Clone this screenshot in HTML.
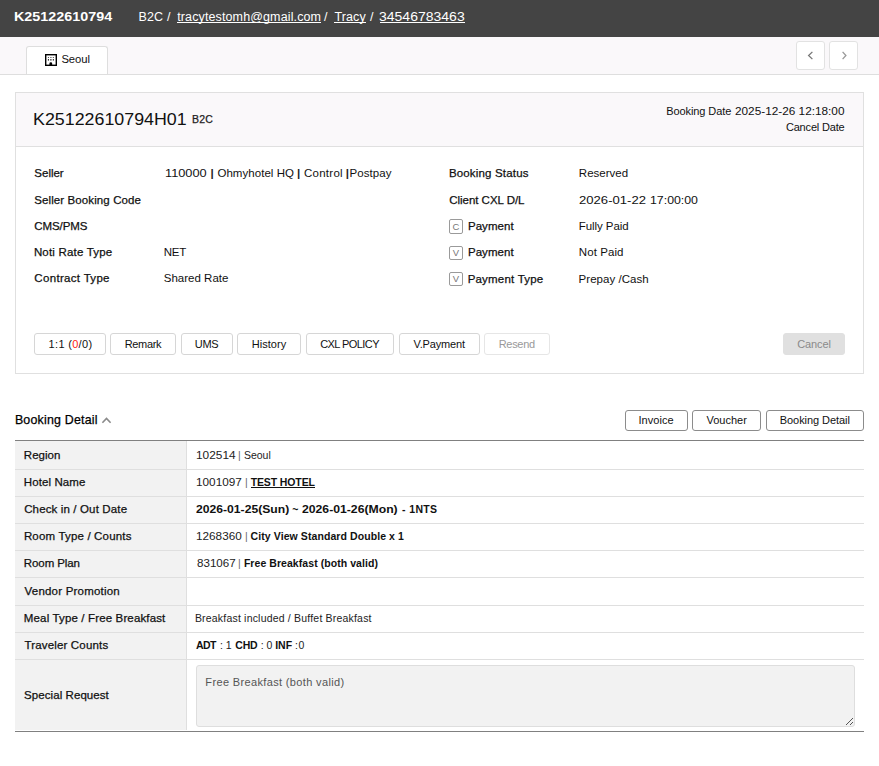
<!DOCTYPE html>
<html lang="en">
<head>
<meta charset="utf-8">
<title>Booking K25122610794</title>
<style>
*{box-sizing:border-box;margin:0;padding:0}
html,body{width:879px;height:766px;overflow:hidden;background:#fff}
body{font-family:"Liberation Sans","NanumGothic",sans-serif;font-size:12px;color:#222;position:relative}
.a{position:absolute}
.t{transform-origin:0 100%;position:absolute;white-space:nowrap;line-height:16px;height:16px}
.m{-webkit-text-stroke:0.25px currentColor}
.b{font-weight:700}
.ul{position:absolute;height:1px}
#topbar{left:0;top:0;width:879px;height:37px;background:#444}
#tabs{left:0;top:37px;width:879px;height:38px;background:#faf8fa;border-bottom:1px solid #dedede}
#tab1{left:26px;top:46px;width:82px;height:28px;background:#fff;border:1px solid #dedede;border-bottom:none;border-radius:3px 3px 0 0}
.navb{top:41px;width:29px;height:29px;background:#fff;border:1px solid #e2e2e2;border-radius:3px}
#card{left:15px;top:92px;width:849px;height:282px;border:1px solid #e0e0e0;background:#fff}
#cardhead{left:16px;top:93px;width:847px;height:54px;background:#faf8fa;border-bottom:1px solid #e0e0e0}
.btn{position:absolute;height:22px;border:1px solid #d6d6d6;border-radius:3px;background:#fff}
.btn.dis{border-color:#e6e6e6}
.btn.gray{background:#e0e0e0;border-color:#e0e0e0}
.btn.dk{border-color:#8c8c8c;height:21px}
.ic{position:absolute;width:14px;height:14px;border:1px solid #9a9a9a;border-radius:2px;background:#fff}
.ic span{position:absolute;left:0;width:12px;top:0;height:12px;line-height:12px;font-size:9.5px;text-align:center;color:#777}
.pipe{position:absolute;width:1.5px;background:#222}
.tp{position:absolute;width:1px;background:#777}
.lab{position:absolute;left:15px;width:172px;background:#f2f2f2;border-right:1px solid #dfdfdf}
.hl{position:absolute;left:15px;width:849px;height:1px;background:#dfdfdf}
</style>
</head>
<body>
<div id="topbar" class="a"></div>
<div id="tabs" class="a"></div>
<div id="tab1" class="a"></div>
<svg class="a" style="left:45px;top:54px" width="12" height="12" viewBox="0 0 12 12"><rect x="0.7" y="0.7" width="10.6" height="10.6" fill="#fff" stroke="#000" stroke-width="1.4"/><path d="M4.4 11V9.7a1.4 1.4 0 0 1 2.8 0V11z" fill="#000"/><g fill="#555"><rect x="2.9" y="3" width="1.1" height="1"/><rect x="5.3" y="3" width="1.2" height="1"/><rect x="7.8" y="3" width="1.1" height="1"/></g><g fill="#333"><rect x="2.9" y="5" width="1.1" height="1.6"/><rect x="5.3" y="5" width="1.2" height="1.6"/><rect x="7.8" y="5" width="1.1" height="1.6"/></g></svg>
<div class="navb a" style="left:796px"></div>
<div class="navb a" style="left:829px"></div>
<svg class="a" style="left:805px;top:50px" width="10" height="11" viewBox="0 0 10 11"><path d="M7.4 1.9L3.6 5.5l3.8 3.6" fill="none" stroke="#777" stroke-width="1.3"/></svg>
<svg class="a" style="left:839px;top:50px" width="10" height="11" viewBox="0 0 10 11"><path d="M3.6 1.9L6.9 5.5L3.6 9.1" fill="none" stroke="#999" stroke-width="1.3"/></svg>

<div id="card" class="a"></div>
<div id="cardhead" class="a"></div>


<div class="ic" style="left:449px;top:219px;height:15px"><span style="top:1px">C</span></div>
<div class="ic" style="left:449px;top:246px"><span>V</span></div>
<div class="ic" style="left:449px;top:272px"><span>V</span></div>

<div class="btn" style="left:34px;top:333px;width:72px"></div>
<div class="btn" style="left:110px;top:333px;width:66px"></div>
<div class="btn" style="left:181px;top:333px;width:52px"></div>
<div class="btn" style="left:237px;top:333px;width:64px"></div>
<div class="btn" style="left:306px;top:333px;width:88px"></div>
<div class="btn" style="left:399px;top:333px;width:81px"></div>
<div class="btn dis" style="left:484px;top:333px;width:66px"></div>
<div class="btn gray" style="left:783px;top:333px;width:62px"></div>

<svg class="a" style="left:101px;top:415px" width="11" height="10" viewBox="0 0 11 10"><path d="M1.4 7.8L5.5 3.4l4.1 4.4" fill="none" stroke="#8a8a8a" stroke-width="1.6"/></svg>
<div class="btn dk" style="left:625px;top:410px;width:63px"></div>
<div class="btn dk" style="left:692px;top:410px;width:69px"></div>
<div class="btn dk" style="left:766px;top:410px;width:98px"></div>

<div class="a" style="left:15px;top:440px;width:849px;height:1px;background:#808080"></div>
<div class="lab" style="top:441px;height:289px"></div>
<div class="hl" style="top:469px"></div>
<div class="hl" style="top:496px"></div>
<div class="hl" style="top:523px"></div>
<div class="hl" style="top:550px"></div>
<div class="hl" style="top:577px"></div>
<div class="hl" style="top:605px"></div>
<div class="hl" style="top:632px"></div>
<div class="hl" style="top:659px"></div>
<div class="a" style="left:15px;top:731px;width:849px;height:1px;background:#808080"></div>
<div class="a" style="left:196px;top:665px;width:659px;height:62px;background:#f2f2f2;border:1px solid #dedede;border-radius:3px"></div>
<svg class="a" style="left:844px;top:716px" width="10" height="10" viewBox="0 0 10 10"><path d="M9 2L2 9M9 6L6 9" stroke="#555" stroke-width="1" fill="none"/></svg>


<div class="ul" style="left:177px;top:22px;width:144px;background:#fff"></div>
<div class="ul" style="left:334px;top:22px;width:32px;background:#fff"></div>
<div class="ul" style="left:380px;top:22px;width:85px;background:#fff"></div>
<div class="ul" style="left:250.5px;top:487px;width:64.5px;background:#111"></div>

<span class="t b" id="h1" style="left:13.54px;top:9.00px;font-size:12.5px;color:#fff;transform:scale(1.1481,1.0);">K25122610794</span>
<span class="t" id="h2" style="left:138.56px;top:9.00px;font-size:12.5px;color:#fff;letter-spacing:0.135px;">B2C /</span>
<span class="t" id="h3" style="left:177.19px;top:9.00px;font-size:12.5px;color:#fff;letter-spacing:0.124px;">tracytestomh@gmail.com</span>
<span class="t" id="h4" style="left:324.00px;top:9.00px;font-size:12.5px;color:#fff;">/</span>
<span class="t" id="h5" style="left:334.51px;top:9.00px;font-size:12.5px;color:#fff;letter-spacing:0.091px;">Tracy</span>
<span class="t" id="h6" style="left:370.00px;top:9.00px;font-size:12.5px;color:#fff;">/</span>
<span class="t" id="h7" style="left:379.16px;top:9.00px;font-size:12.5px;color:#fff;transform:scale(1.1206,1.0);">34546783463</span>
<span class="t" id="tabt" style="left:61.39px;top:51.00px;font-size:11.25px;color:#111;letter-spacing:-0.044px;">Seoul</span>
<span class="t" id="c1" style="left:32.58px;top:112.00px;font-size:16px;color:#111;transform:scale(1.1146,1.0);">K25122610794H01</span>
<span class="t m" id="c2" style="left:192.07px;top:111.00px;font-size:10.5px;color:#222;letter-spacing:0.218px;">B2C</span>
<span class="t" id="c3a" style="left:666.37px;top:103.00px;font-size:11px;color:#111;letter-spacing:-0.104px;">Booking Date</span>
<span class="t" id="c3b" style="left:735.23px;top:103.00px;font-size:11px;color:#111;transform:scale(1.0716,1.0);">2025-12-26 12:18:00</span>
<span class="t" id="c4" style="left:785.89px;top:119.00px;font-size:11px;color:#111;letter-spacing:-0.167px;">Cancel Date</span>
<span class="t m" id="l1" style="left:34.36px;top:165.00px;font-size:11.5px;color:#111;letter-spacing:-0.016px;">Seller</span>
<span class="t m" id="l2" style="left:34.19px;top:192.00px;font-size:11.5px;color:#111;letter-spacing:0.109px;">Seller Booking Code</span>
<span class="t m" id="l3" style="left:34.14px;top:218.00px;font-size:11.5px;color:#111;letter-spacing:-0.050px;">CMS/PMS</span>
<span class="t m" id="l4" style="left:33.89px;top:244.00px;font-size:11.5px;color:#111;letter-spacing:0.187px;">Noti Rate Type</span>
<span class="t m" id="l5" style="left:34.37px;top:270.00px;font-size:11.5px;color:#111;letter-spacing:0.314px;">Contract Type</span>
<span class="t" id="v1a" style="left:164.77px;top:165.00px;font-size:11.5px;color:#111;transform:scale(1.1104,1.0);">110000</span>
<span class="t" id="v1c" style="left:217.46px;top:165.00px;font-size:11.5px;color:#111;letter-spacing:0.040px;">Ohmyhotel HQ</span>
<span class="t" id="v1e" style="left:303.99px;top:165.00px;font-size:11.5px;color:#111;letter-spacing:0.264px;">Control</span>
<span class="t" id="v1g" style="left:349.51px;top:165.00px;font-size:11.5px;color:#111;letter-spacing:0.067px;">Postpay</span>
<span class="t" id="v4" style="left:163.79px;top:244.00px;font-size:11.5px;color:#111;letter-spacing:-0.280px;">NET</span>
<span class="t" id="v5" style="left:163.81px;top:270.00px;font-size:11.5px;color:#111;letter-spacing:-0.000px;">Shared Rate</span>
<span class="t m" id="r1" style="left:448.88px;top:165.00px;font-size:11.5px;color:#111;letter-spacing:0.175px;">Booking Status</span>
<span class="t m" id="r2" style="left:449.17px;top:192.00px;font-size:11.5px;color:#111;letter-spacing:-0.021px;">Client CXL D/L</span>
<span class="t m" id="r3" style="left:467.94px;top:218.00px;font-size:11.5px;color:#111;letter-spacing:0.057px;">Payment</span>
<span class="t m" id="r4" style="left:467.94px;top:244.00px;font-size:11.5px;color:#111;letter-spacing:0.057px;">Payment</span>
<span class="t m" id="r5" style="left:467.64px;top:271.00px;font-size:11.5px;color:#111;letter-spacing:0.208px;">Payment Type</span>
<span class="t" id="w1" style="left:578.82px;top:165.00px;font-size:11.5px;color:#111;letter-spacing:0.018px;">Reserved</span>
<span class="t" id="w2a" style="left:579.28px;top:192.00px;font-size:11.5px;color:#111;transform:scale(1.1389,1.0);">2026-01-22</span>
<span class="t" id="w2b" style="left:650.02px;top:192.00px;font-size:11.5px;color:#111;transform:scale(1.0717,1.0);">17:00:00</span>
<span class="t" id="w3" style="left:578.82px;top:218.00px;font-size:11.5px;color:#111;letter-spacing:-0.079px;">Fully Paid</span>
<span class="t" id="w4" style="left:578.82px;top:244.00px;font-size:11.5px;color:#111;letter-spacing:0.075px;">Not Paid</span>
<span class="t" id="w5" style="left:578.62px;top:271.00px;font-size:11.5px;color:#111;letter-spacing:0.036px;">Prepay /Cash</span>
<span class="t" id="b1" style="left:48.61px;top:336.00px;font-size:11px;color:#111;letter-spacing:0.307px;">1:1 (<span style="color:#f21">0</span>/0)</span>
<span class="t" id="b2" style="left:124.74px;top:336.00px;font-size:11px;color:#111;letter-spacing:-0.359px;">Remark</span>
<span class="t" id="b3" style="left:194.82px;top:336.00px;font-size:11px;color:#111;letter-spacing:-0.345px;">UMS</span>
<span class="t" id="b4" style="left:251.69px;top:336.00px;font-size:11px;color:#111;letter-spacing:0.055px;">History</span>
<span class="t" id="b5" style="left:320.23px;top:336.00px;font-size:11px;color:#111;letter-spacing:-0.566px;">CXL POLICY</span>
<span class="t" id="b6" style="left:413.55px;top:336.00px;font-size:11px;color:#111;letter-spacing:-0.165px;">V.Payment</span>
<span class="t" id="b7" style="left:498.74px;top:336.00px;font-size:11px;color:#999;letter-spacing:-0.322px;">Resend</span>
<span class="t" id="b8" style="left:797.17px;top:336.00px;font-size:11px;color:#8a8a8a;letter-spacing:-0.080px;">Cancel</span>
<span class="t m" id="bd" style="left:14.88px;top:412.00px;font-size:12.4px;color:#000;letter-spacing:0.212px;">Booking Detail</span>
<span class="t" id="b9" style="left:638.49px;top:412.00px;font-size:11px;color:#111;letter-spacing:0.056px;">Invoice</span>
<span class="t" id="b10" style="left:706.50px;top:412.00px;font-size:11px;color:#111;letter-spacing:-0.009px;">Voucher</span>
<span class="t" id="b11" style="left:779.75px;top:412.00px;font-size:11px;color:#111;letter-spacing:-0.061px;">Booking Detail</span>
<span class="t m" id="t1" style="left:23.83px;top:447.00px;font-size:11.5px;color:#111;letter-spacing:0.000px;">Region</span>
<span class="t m" id="t2" style="left:23.83px;top:474.00px;font-size:11.5px;color:#111;letter-spacing:0.085px;">Hotel Name</span>
<span class="t m" id="t3" style="left:24.17px;top:501.00px;font-size:11.5px;color:#111;letter-spacing:0.141px;">Check in / Out Date</span>
<span class="t m" id="t4" style="left:23.90px;top:528.00px;font-size:11.5px;color:#111;letter-spacing:0.171px;">Room Type / Counts</span>
<span class="t m" id="t5" style="left:23.84px;top:555.00px;font-size:11.5px;color:#111;letter-spacing:-0.088px;">Room Plan</span>
<span class="t m" id="t6" style="left:24.56px;top:583.00px;font-size:11.5px;color:#111;letter-spacing:0.211px;">Vendor Promotion</span>
<span class="t m" id="t7" style="left:23.85px;top:610.00px;font-size:11.5px;color:#111;letter-spacing:0.144px;">Meal Type / Free Breakfast</span>
<span class="t m" id="t8" style="left:24.40px;top:637.00px;font-size:11.5px;color:#111;letter-spacing:0.171px;">Traveler Counts</span>
<span class="t m" id="t9" style="left:24.10px;top:687.00px;font-size:11.5px;color:#111;letter-spacing:0.070px;">Special Request</span>
<span class="t" id="x1a" style="left:196.05px;top:447.00px;font-size:10.5px;color:#222;transform:scale(1.1311,1.0);">102514</span>
<span class="t" id="x1c" style="left:243.88px;top:447.00px;font-size:10.5px;color:#222;letter-spacing:0.022px;">Seoul</span>
<span class="t" id="x2a" style="left:195.63px;top:474.00px;font-size:10.5px;color:#222;transform:scale(1.1205,1.0);">1001097</span>
<span class="t b" id="x2c" style="left:250.70px;top:474.00px;font-size:10.5px;color:#111;letter-spacing:-0.120px;">TEST HOTEL</span>
<span class="t b" id="x3a" style="left:196.08px;top:501.00px;font-size:10.5px;color:#111;transform:scale(1.1576,1.0);">2026-01-25(Sun)</span>
<span class="t b" id="x3b" style="left:292.29px;top:501.00px;font-size:10.5px;color:#111;">~</span>
<span class="t b" id="x3c" style="left:302.17px;top:501.00px;font-size:10.5px;color:#111;transform:scale(1.1628,1.0);">2026-01-26(Mon)</span>
<span class="t b" id="x3d" style="left:402.12px;top:501.00px;font-size:10.5px;color:#111;">-</span>
<span class="t b" id="x3e" style="left:409.28px;top:501.00px;font-size:10.5px;color:#111;letter-spacing:0.277px;">1NTS</span>
<span class="t" id="x4a" style="left:195.62px;top:528.00px;font-size:10.5px;color:#222;transform:scale(1.1191,1.0);">1268360</span>
<span class="t b" id="x4c" style="left:250.60px;top:528.00px;font-size:10.5px;color:#111;letter-spacing:0.082px;">City View Standard Double x 1</span>
<span class="t" id="x5a" style="left:196.78px;top:555.00px;font-size:10.5px;color:#222;transform:scale(1.1033,1.0);">831067</span>
<span class="t b" id="x5c" style="left:243.89px;top:555.00px;font-size:10.5px;color:#111;letter-spacing:0.061px;">Free Breakfast (both valid)</span>
<span class="t" id="x7" style="left:194.91px;top:610.00px;font-size:10.5px;color:#222;letter-spacing:0.193px;">Breakfast included / Buffet Breakfast</span>
<span class="t b" id="x8a" style="left:196.02px;top:637.00px;font-size:10.5px;color:#111;letter-spacing:-0.609px;">ADT</span>
<span class="t" id="x8b" style="left:220.12px;top:637.00px;font-size:10.5px;color:#222;">:</span>
<span class="t" id="x8c" style="left:225.82px;top:637.00px;font-size:10.5px;color:#222;">1</span>
<span class="t b" id="x8d" style="left:235.16px;top:637.00px;font-size:10.5px;color:#111;letter-spacing:-0.104px;">CHD</span>
<span class="t" id="x8e" style="left:260.77px;top:637.00px;font-size:10.5px;color:#222;">:</span>
<span class="t" id="x8f" style="left:266.51px;top:637.00px;font-size:10.5px;color:#222;">0</span>
<span class="t b" id="x8g" style="left:275.13px;top:637.00px;font-size:10.5px;color:#111;letter-spacing:0.038px;">INF</span>
<span class="t" id="x8h" style="left:294.93px;top:637.00px;font-size:10.5px;color:#222;letter-spacing:0.551px;">:0</span>
<span class="t" id="x9" style="left:205.33px;top:674.00px;font-size:11px;color:#555;letter-spacing:0.353px;">Free Breakfast (both valid)</span>
<span class="t b" id="p1" style="left:210.45px;top:165.00px;font-size:11.5px;color:#222;">|</span>
<span class="t b" id="p2" style="left:296.95px;top:165.00px;font-size:11.5px;color:#222;">|</span>
<span class="t b" id="p3" style="left:345.74px;top:165.00px;font-size:11.5px;color:#222;">|</span>
<span class="t" id="q1" style="left:237.88px;top:447.00px;font-size:10.5px;color:#666;">|</span>
<span class="t" id="q2" style="left:245.06px;top:474.00px;font-size:10.5px;color:#666;">|</span>
<span class="t" id="q4" style="left:245.06px;top:528.00px;font-size:10.5px;color:#666;">|</span>
<span class="t" id="q5" style="left:237.88px;top:555.00px;font-size:10.5px;color:#666;">|</span>
</body>
</html>
